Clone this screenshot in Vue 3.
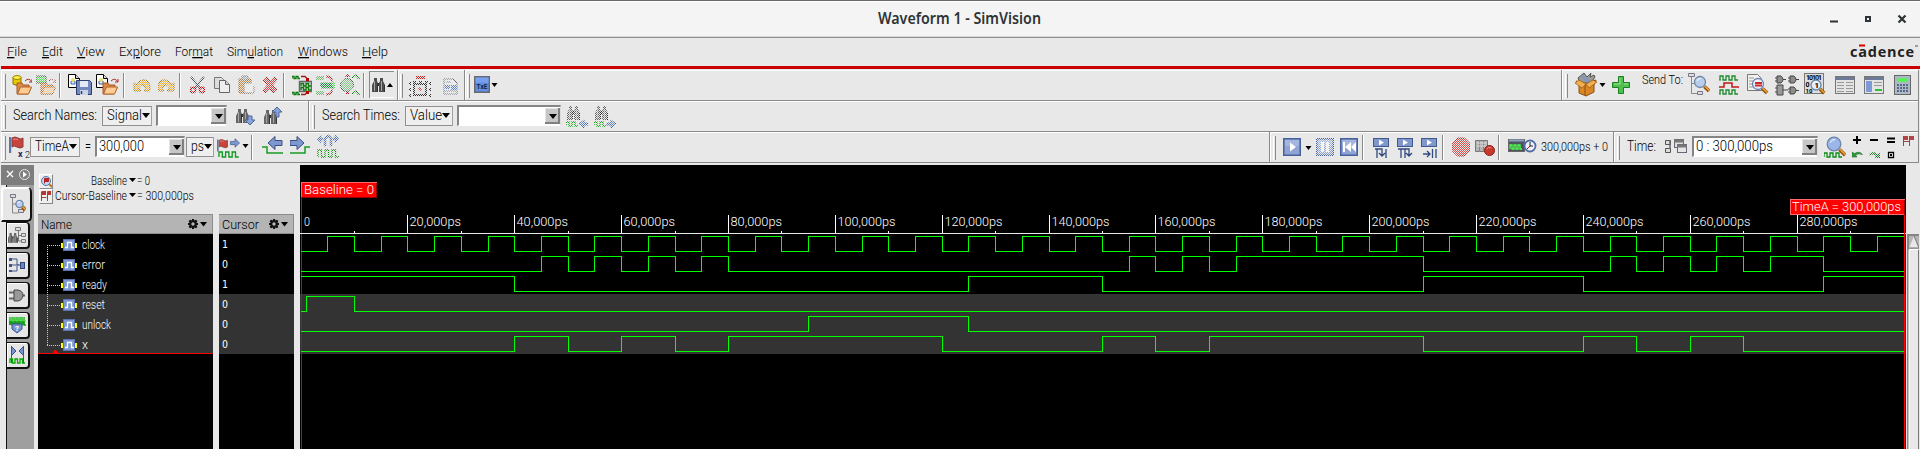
<script setup>
import { h } from 'vue'

// Single line of text with a fixed run length
const T = (p) =>
  h('svg', { class: 't', width: p.w, height: p.h || 14 }, [
    h('text', {
      x: 0, y: p.y ?? 11, 'font-size': p.s || 13, fill: p.c || '#000',
      textLength: p.w, lengthAdjust: 'spacingAndGlyphs',
    }, p.u === undefined ? p.t : [
      p.t.slice(0, p.u),
      h('tspan', { 'text-decoration': 'underline' }, p.t[p.u]),
      p.t.slice(p.u + 1),
    ]),
  ])
T.props = ['t', 'w', 'h', 's', 'y', 'c', 'u']

const menus = [
  { x: 7, t: 'File', w: 20, u: 0 }, { x: 42, t: 'Edit', w: 21, u: 0 }, { x: 77, t: 'View', w: 28, u: 0 },
  { x: 119, t: 'Explore', w: 42, u: 2 }, { x: 175, t: 'Format', w: 38, u: 3 }, { x: 227, t: 'Simulation', w: 56, u: 3 },
  { x: 298, t: 'Windows', w: 50, u: 0 }, { x: 362, t: 'Help', w: 26, u: 0 },
]

/* shared icon parts */
const folder = (x, y) => `<path d="M${x} ${y + 12}V${y + 1}h5l1 2h6v3h2l-3 6z" fill="#d98a4a" stroke="#a85a20"/><path d="M${x + .5} ${y + 12}l3-7h11l-3 7z" fill="#ffcb94" stroke="#b06428"/><path d="M${x + 8} ${y - 1}q4-4 7 1m0-3v3h-3" fill="none" stroke="#b03030"/>`
const page = (x, y) => `<path d="M${x}.5 ${y}.5h7l4 4v9h-11z" fill="#fff" stroke="#000"/><path d="M${x + 7}.5 ${y}.5v4h4" fill="#ddd" stroke="#000"/><path d="M${x + 3} ${y + 10}v-3h4v3z" fill="#dfe8ff" stroke="#3f63a8"/><circle cx="${x + 5}" cy="${y + 6}" r="2" fill="#e8e070"/>`
const binoc = (x, y, c = '#666') => `<g transform="translate(${x} ${y})"><path d="M2 0h3v3l1 2v9H0V7l2-4zM8 0h3v3l2 4v7H7V5l1-2z" fill="${c}"/><path d="M6 5h1v3H6z" fill="#333"/><path d="M2.500 3v10M9.500 3v10" stroke="#a5a5a5"/><path d="M5.500 5v9M12.500 7v7" stroke="#333"/></g>`
const mag = (cx, cy, r, f = '#b9cdec') => `<path d="M${cx + r * .8} ${cy + r * .8}l${r * .85} ${r * .85}" stroke="#8a5010" stroke-width="3.600"/><path d="M${cx + r * .9} ${cy + r * .8}l${r * .8} ${r * .8}" stroke="#f0a030" stroke-width="1.600"/><circle cx="${cx}" cy="${cy}" r="${r}" fill="${f}" stroke="#6c86a8" stroke-width="1.300"/><path d="M${cx - r * .55} ${cy - r * .2}q${r * .2}-${r * .5} ${r * .7}-${r * .45}" fill="none" stroke="#fff"/>`
const flag = (x, y) => `<path d="M${x + 1} ${y}v16" stroke="#5b77a6" stroke-width="2.400"/><path d="M${x + 3} ${y + 1}q3-2 6 0t5 0v9q-3 2-6 0t-5 0z" fill="#c9433d" stroke="#8c3a3a"/><path d="M${x + 4} ${y + 2.5}q3-1 5 0" fill="none" stroke="#e98a80"/>`
const wave = (x, y, n, c = '#1f8a2a', s = 3, hh = 4) => `<path d="M${x} ${y}${`v-${hh}h${s}v${hh}h${s}`.repeat(n)}" fill="none" stroke="${c}" stroke-width="1.300"/>`
const arr = (x, y, d, f = '#7d97cf') => `<path transform="translate(${x} ${y}) scale(${d} 1)" d="M-7-2.500h7v-4l7 6.500-7 6.500v-4h-7z" fill="${f}" stroke="#3a4f80"/>`
const win = (x, y, w, hh) => `<rect x="${x}.5" y="${y}.5" width="${w}" height="${hh}" fill="#e4e4e4" stroke="#777"/><path d="M${x + 1} ${y + 2.5}h${w - 1}" stroke="#6d7b99" stroke-width="3"/>`
const play = (x, y) => `<path d="M${x} ${y}l6 4.500-6 4.500z" fill="#fff"/>`
const blue = '<rect x=".75" y="6.750" width="16.500" height="16.500" fill="#8fa4d4" stroke="#46619b" stroke-width="1.500"/><path d="M2 8h14v6H2z" fill="#a5b6de"/>'
const step = '<rect x=".5" y="6.500" width="15" height="8" fill="#7f97cb" stroke="#41598e"/><path d="M6 7.500l5 3-5 3z" fill="#fff"/>'
const gates = (x, y) => `<path d="M${x} ${y}h4q4 3.500 0 7h-4z" fill="#8d8d8d" stroke="#444"/><path d="M${x - 2} ${y + 2}h2m-2 3h2m6-1.500h3" stroke="#444"/>`

const I = {
  opendb: `<path d="M1 7v7q4 3 8 0V7" fill="#e8c800" stroke="#8a7000"/><ellipse cx="5" cy="7.500" rx="4" ry="2" fill="#fff04a" stroke="#a08800"/>${folder(5, 12)}`,
  opendb2: `<path d="M0 6h10v7H0z" fill="#60e060" stroke="#444"/>${folder(5, 12)}`,
  save: `${page(0, 4)}<path d="M8.500 10.500h13l2 2v12h-15z" fill="#7389bd" stroke="#2b3f75"/><path d="M12 11h8v6h-8z" fill="#e6e9f3"/><path d="M12 20h8v5h-8z" fill="#ccd3e6"/><path d="M13.500 21v3" stroke="#2b3f75" stroke-width="1.500"/>`,
  opendoc: `${page(0, 4)}${folder(7, 12)}`,
  undo: '<path d="M1 13v8h7l-2.500-3q3-5 6-2 2 2 0 5h5q2-8-4-11-6-1-8.500 5z" fill="#f5b83a" stroke="#a87410"/>',
  redo: '<g transform="translate(17) scale(-1 1)"><path d="M1 13v8h7l-2.500-3q3-5 6-2 2 2 0 5h5q2-8-4-11-6-1-8.500 5z" fill="#f5b83a" stroke="#a87410"/></g>',
  cut: '<path d="M1 7l9 11M14 7L5 18" stroke="#555" stroke-width="2"/><circle cx="3" cy="20" r="2.500" fill="none" stroke="#c00" stroke-width="1.800"/><circle cx="12" cy="20" r="2.500" fill="none" stroke="#c00" stroke-width="1.800"/>',
  copy: '<path d="M.5 7.500h7l2 2v9h-9z" fill="#ddd" stroke="#777"/><path d="M5.500 10.500h6l4 4v8h-10z" fill="#eee" stroke="#666"/><path d="M11.500 10.500v4h4" fill="#ccc" stroke="#666"/>',
  paste: '<path d="M1 9h12v14H1z" fill="#cf8a45" stroke="#945a20"/><path d="M4 6h6v4H4z" fill="#aaa" stroke="#777"/><path d="M6 13h7l3 3v7H6z" fill="#eee" stroke="#777"/>',
  del: '<path d="M1 10l3-3 4 4 4-4 3 3-4.500 5 4.500 5-3 3-4-4-4 4-3-3 4.500-5z" fill="#d94a4a" stroke="#a01818"/>',
  grpA: `<rect x="7.500" y="11.500" width="12" height="10" fill="#cfcfcf" stroke="#666" stroke-width="1.500"/>${wave(9, 16, 2, '#0a7a0a', 2.5, 2.5)}${wave(9, 20, 2, '#0a7a0a', 2.5, 2.5)}${wave(0, 8.5, 2, '#0a7a0a', 2, 2)}${wave(0, 24.5, 2, '#0a7a0a', 2, 2)}<path d="M9 6.500h4l3 3m-7 15h4l3-3" fill="none" stroke="#a01818" stroke-width="1.300"/><path d="M14 8h3v3h-3zM14 21h3v3h-3z" fill="#b00"/>`,
  grpB: `<path d="M0 7h8M0 9h8M0 22h8M0 24h8" stroke="#080" stroke-width="1"/><path d="M5 12h14v7H5z" fill="#5de05d"/>${wave(5, 17, 3, '#063', 2, 3)}<path d="M10 6.500q6 0 6 5m-6 13q6 0 6-5" fill="none" stroke="#b22" stroke-width="1.800"/>`,
  grpC: '<ellipse cx="7" cy="15" rx="6.500" ry="6.500" fill="#8ac78a" stroke="#444"/><path d="M5 7h5l-2.500-3zM5 24h5l-2.500-3z" fill="#b00"/><path d="M12 8l4-3 2 3h2M12 24l4-3 2 3h2" fill="none" stroke="#080" stroke-width="1.500"/>',
  binoc: binoc(0, 8, '#4c4c4c'),
  area: '<path d="M7 6h9v3H7z" fill="#c22"/><rect x="5" y="14" width="12" height="11" fill="#ddd" stroke="#333" stroke-width="2"/><path d="M9 19h4m-2-2v4" stroke="#c00"/><path d="M1 12v3m0 3v3m0 3v3m20-15v3m0 3v3m0 3v3M4 12h3m3 0h3m3 0h3" stroke="#333" stroke-width="2"/>',
  docx: '<path d="M1 9h9l4 4v11H1z" fill="#eee" stroke="#667"/><path d="M2 15h5v4H2zM8 15h6v5H8z" fill="#5f84d8"/><path d="M2 21h11M3 12h5" stroke="#678"/>',
  txe: '<rect x=".75" y="6.750" width="14.500" height="15.500" fill="#5f8fe2" stroke="#68686c" stroke-width="1.500"/><path d="M1.500 7.500h13v5h-13z" fill="#79a0ec"/><text x="2.500" y="19" font-size="6.500" font-weight="700" textLength="11" fill="#14224c">TxE</text>',
  toolbox: '<path d="M3 8l6-5 3 4 4-4-1 4 4-2 1 2-4 6H5z" fill="#9a9a9a" stroke="#555"/><path d="M6 7l8 7 2-2-8-7z" fill="#8196c0"/><path d="M1 11l3 1 6 3 8-4 3-1-2 5v7l-8 4-7-3v-8z" fill="#d98724" stroke="#8a4c10"/><path d="M10 15v10" stroke="#8a4c10"/><path d="M0 13l4-3 7 4-4 4zM22 12l-4-2-7 4 3 4z" fill="#f0b050" stroke="#99540f" stroke-width=".7"/>',
  plus: '<path d="M6.500 6.500h5v6h6v5h-6v6h-5v-6h-6v-5h6z" fill="#4fc04f" stroke="#18801c"/><path d="M8 8v6H2M12 14h4" stroke="#9ce69c" fill="none"/>',
  tree: `<path d="M3.500 6v17.500h7M3.500 13.500h5" fill="none" stroke="#888"/><path d="M.5 3.500h6v3h-6zM9.500 21.500h5v3h-5z" fill="#ddd" stroke="#778"/>${mag(12, 12, 5.5)}`,
  waves: `${wave(1, 10, 3, '#1c8a2c', 3, 4)}<path d="M0 10h2M0 24h2" stroke="#1c8a2c"/>${wave(1, 24, 3, '#1c8a2c', 3, 4)}<path d="M0 17h5v-4h8v4h7" fill="none" stroke="#c01818" stroke-width="1.500"/>`,
  docmag: `<path d="M.5 4.500h10l4 4v12h-14z" fill="#f2f2f2" stroke="#777"/><path d="M2 8h5m-5 3h4m-4 3h4m-4 3h4" stroke="#999"/>${mag(11, 14, 5.5, '#e9eefc')}<path d="M8 13h7m-7 2.500h7" stroke="#d02828" stroke-width="2"/>`,
  gates: `${gates(2, 6)}${gates(15, 6)}${gates(15, 17)}<path d="M2 15h6v10H2z" fill="#999" stroke="#444"/><path d="M0 18h2m-2 4h2m6-2h5" stroke="#444"/>`,
  bits: `<rect x=".5" y="3.500" width="19" height="20" fill="#dedede" stroke="#777"/><text x="2" y="10" font-size="7" font-weight="700" textLength="16">10101</text><text x="1.500" y="17" font-size="7" font-weight="700">0</text><text x="1.500" y="23" font-size="6" font-weight="700">10</text>${mag(12, 15, 5, '#e3edfa')}<text x="10.500" y="18" font-size="8" font-weight="700">1</text>`,
  list: `${win(0, 6, 19, 17)}<path d="M2 12.500h7m-7 3h7m-7 3h7m-7 3h7m2-9h7m-7 3h7m-7 3h7m-7 3h7" stroke="#999"/>`,
  prop: `${win(0, 6, 19, 17)}<path d="M2 11h6v11H2z" fill="#7e9ad6"/><path d="M10 12.500h8m-8 3h8" stroke="#999"/><path d="M11 20h7" stroke="#2fc03a" stroke-width="2"/>`,
  calc: '<rect x=".5" y="5.500" width="16" height="19" fill="#aeb9c6" stroke="#666"/><path d="M3 8h11v4H3z" fill="#5cf05c"/><path d="M3 15h11m-11 3h11m-11 3h11" stroke="#5c6888" stroke-width="2" stroke-dasharray="2 1"/>',
  bdown: `${binoc(0, 8)}<path d="M12 15h4v4h3l-5 5-5-5h3z" fill="#8ba4d6" stroke="#4a66a0"/>`,
  bup: `${binoc(0, 9)}<path d="M12 16h3v-5h3l-5-5-5 5h4z" fill="#8ba4d6" stroke="#4a66a0"/>`,
  bleft: `${binoc(1, 5)}${wave(0, 25, 2, '#0a0', 3, 4)}<path d="M22 22h-4v-3l-5 4 5 4v-3h4z" fill="#6c8bd0" stroke="#3f5f9c"/>`,
  bright: `${binoc(1, 5)}${wave(0, 25, 2, '#0a0', 3, 4)}<path d="M13 22h4v-3l5 4-5 4v-3h-4z" fill="#6c8bd0" stroke="#3f5f9c"/>`,
  flagx: `${flag(0, 5)}<text x="9" y="25" font-size="9" font-weight="700" fill="#1c2a66">x</text><text x="16" y="26" font-size="9">2</text>`,
  flagw: `<g transform="scale(.75)">${flag(0, 10)}</g>${wave(2, 25, 3, '#0a9a1a', 3.3, 5)}<g transform="translate(18 11) scale(.65)">${arr(0, 0, 1)}</g>`,
  goL: `<path d="M0 15h5v6h16" fill="none" stroke="#1a9a24" stroke-width="1.500"/>${arr(13, 11, -1)}`,
  goR: `<path d="M0 21h15v-6h5" fill="none" stroke="#1a9a24" stroke-width="1.500"/>${arr(7, 11, 1)}`,
  sch: `<path d="M7 14V6l3-3h2l3 3v8h-2V7l-2-2-2 2v7zM0 7l4-4v3h2v2H4v3zM22 7l-4-4v3h-2v2h2v3z" fill="#4f6fb6" stroke="#5b75b0" stroke-width=".6"/>${wave(1, 25, 3, '#080', 3.5, 7)}`,
  play: blue + play(7, 10.5),
  pause: `${blue}<path d="M5 10h3v10H5zM10 10h3v10h-3z" fill="#fff"/>`,
  rew: `${blue}<path d="M3 10h2v10H3zM11 10v10l-6-5zM16 10v10l-5-5z" fill="#fff"/>`,
  s1: `${step}<path d="M2 17h7v7m-3-3l3 3 3-3M13 17v9M4 17v9" fill="none" stroke="#30497f" stroke-width="1.300"/>`,
  s2: `${step}<path d="M1 17h11v6m-3-2l3 3 3-3M4 17v9M8 17v9" fill="none" stroke="#30497f" stroke-width="1.300"/>`,
  s3: `${step}<path d="M2 22h7m-3-3l3 3-3 3M11.500 17v9M15 17v9" fill="none" stroke="#30497f" stroke-width="1.300"/>`,
  stop: '<path d="M5.500 6h7l5.500 5.500v7L12.500 24h-7L0 18.500v-7z" fill="#e0504c" stroke="#a01c1c"/>',
  rec: '<path d="M.5 8.500h12v11H.5z" fill="#b5b5b5" stroke="#777"/><path d="M4.500 8v12M8.500 8v12" stroke="#888"/><path d="M2 11h10m-10 3h10" stroke="#ddd"/><circle cx="14.500" cy="18.500" r="5" fill="#c8382c" stroke="#8a1c14"/><path d="M11.500 17q2-3 5-1" stroke="#f09080" fill="none"/>',
  clk: `<rect x=".5" y="7.500" width="16" height="12" fill="#4d5560" stroke="#666"/><path d="M1 8.500h15" stroke="#8fa0c0" stroke-width="2"/>${wave(2, 17, 3, '#4fff4f', 2, 4)}<circle cx="22" cy="14" r="5.500" fill="#eef2fa" stroke="#4f6ca6" stroke-width="1.800"/><path d="M22 10v4h3" fill="none" stroke="#222"/><path d="M22 14l-3 3" stroke="#c00"/>`,
  link: '<path d="M.5 8.500h5v4h-5zM.5 16.500h5v4h-5z" fill="#ddd" stroke="#555"/><path d="M5 8v9" stroke="#666" stroke-width="1.500"/><rect x="9.500" y="7.500" width="9" height="8" fill="#ddd" stroke="#667"/><path d="M9 9h10" stroke="#777" stroke-width="3"/><rect x="12.500" y="12.500" width="9" height="8" fill="#e5e5e5" stroke="#667"/><path d="M12 14h10" stroke="#777" stroke-width="3"/>',
  magw: `${wave(0, 25, 3, '#0a8a1a', 3, 4)}${mag(10, 12, 6.8, '#9db6ea')}`,
  grid: '<path d="M1 8h8M5 4v8M18 8h8M35 6.500h8M35 10h8" stroke="#000" stroke-width="2"/><path d="M52 4v10h-1V4zM57 10h-5v-1h5V4h1v10h-1z" fill="#944"/><path d="M52 4h4v4h-4zM58 4h4v4h-4z" fill="#b54545"/><path d="M0 20v5h5l-1.500-2q3-2 7-.5-3-4-8-1z" fill="#2d9a3a" stroke="#1a6a24" stroke-width=".6"/><path class="dim" d="M17 22q5-4 8 0l3-1v5h-5l1-2q-3-3-6 0z" fill="#1a7a24"/><path d="M36.500 20.500h5v5h-5z" fill="#fff" stroke="#000" stroke-width="1.300"/><path d="M38 22h2v2h-2z"/>',
}

// items carry their start column; the gap to the preceding item is derived from it
const section = (x, end, raw) => {
  let at = x
  const items = raw.map(([k, ix, w, o = {}]) => {
    const it = { k, w, ...o, style: { marginLeft: ix - at + 'px', width: w + 'px' } }
    at = ix + w
    return it
  })
  return { style: { width: end - x + 'px' }, items }
}
const ic = (n, x, w, dim) => ['icon', x, w, { n, dim }]
const tx = (t, x, w, s = 14, y = 19) => ['text', x, w, { t, s, y }]
const sep = (x) => ['sep', x, 2]
const grip = (x) => ['grip', x, 3]
const car = (x, y = 13) => ['caret', x, 7, { y }]
const sel = (t, x, w, tw) => ['select', x, w, { t, tw }]
const ent = (t, x, w, tw) => ['entry', x, w, { t, tw }]

const rows = [
  [
    section(1, 398, [grip(3), ic('opendb', 12, 20), ic('opendb2', 36, 20, 1), sep(59), ic('save', 68, 24), ic('opendoc', 96, 23), sep(123),
      ic('undo', 133, 18, 1), ic('redo', 158, 17, 1), sep(179), ic('cut', 190, 15, 1), ic('copy', 214, 17), ic('paste', 238, 17, 1), ic('del', 262, 15, 1), sep(283),
      ic('grpA', 292, 20), ic('grpB', 316, 20, 1), ic('grpC', 340, 20, 1), sep(363), ['press', 369, 25]]),
    section(398, 465, [grip(400), ic('area', 409, 23, 1), ic('docx', 443, 15, 1)]),
    section(465, 1562, [grip(467), ic('txe', 474, 16), car(491)]),
    section(1562, 1919, [grip(1565), ic('toolbox', 1575, 22), car(1599), ic('plus', 1612, 18), tx('Send To:', 1642, 41, 12, 14), ic('tree', 1688, 22), ic('waves', 1719, 20), ic('docmag', 1747, 22),
      ic('gates', 1775, 24), ic('bits', 1804, 23), ic('list', 1835, 20), ic('prop', 1864, 20), ic('calc', 1894, 17)]),
  ],
  [
    section(1, 309, [grip(3), tx('Search Names:', 13, 84), sel('Signal', 102, 50, 35), ent('', 156, 71, 0), ic('bdown', 236, 19), ic('bup', 264, 18)]),
    section(309, 1919, [grip(312), tx('Search Times:', 322, 78), sel('Value', 405, 48, 32), ent('', 457, 104, 0), ic('bleft', 566, 22, 1), ic('bright', 594, 22, 1)]),
  ],
  [
    section(1, 1270, [grip(3), ic('flagx', 9, 21), sel('TimeA', 30, 50, 34), tx('=', 85, 6), ent('300,000', 95, 90, 45), sel('ps', 186, 28, 13), ic('flagw', 217, 23), car(242, 12), sep(251),
      ic('goL', 262, 21), ic('goR', 290, 20), ic('sch', 317, 22, 1)]),
    section(1270, 1614, [grip(1273), ic('play', 1283, 18), car(1305, 14), ic('pause', 1316, 18, 1), ic('rew', 1340, 18), sep(1362), ic('s1', 1373, 16), ic('s2', 1397, 16), ic('s3', 1421, 16), sep(1442),
      ic('stop', 1452, 18, 1), ic('rec', 1475, 20), sep(1498), ic('clk', 1508, 29), tx('300,000ps + 0', 1541, 67, 12, 19)]),
    section(1614, 1919, [grip(1617), tx('Time:', 1627, 29), ic('link', 1665, 22), ent('0 : 300,000ps', 1692, 126, 77), ic('magw', 1824, 22), ic('grid', 1852, 63)]),
  ],
]

const tabs = [
  `<path d="M7.500 8v17h6M7.500 16h6" fill="none" stroke="#888"/><path d="M5.500 6.500h5v3h-5zM13.500 21.500h5v3h-5z" fill="#ddd" stroke="#778"/>${mag(14.5, 16, 3.6)}`,
  `<g transform="translate(1 10) scale(.75 .7)">${binoc(0, 0)}</g><path d="M11.500 7v11h4M11.500 12.500h4" fill="none" stroke="#777"/><path d="M8.500 4.500h5v3h-5zM14.500 10.500h4v3h-4zM14.500 16.500h4v3h-4z" fill="#ddd" stroke="#777"/>`,
  '<path d="M2 6h8v6h4M2 12h10M2 18h8v-5" fill="none" stroke="#3c5688"/><path d="M2 5h3v3H2zM2 11h3v3H2zM2 17h3v2H2z" fill="#3c5688"/><rect x="13.500" y="9.500" width="4" height="6" fill="#6d87be" stroke="#2f477c"/>',
  '<path d="M2 9.500h5M2 15.500h5M15 12.500h3" stroke="#666" stroke-width="2"/><path d="M7 7h4q5 1 5 5.500-1 5-5 5.500H7z" fill="#999" stroke="#444"/>',
  `<path d="M2 4h16v8H2z" fill="#777"/>${wave(3, 8, 4, '#4e4', 2, 3)}${wave(3, 12, 4, '#0a0', 2, 3)}<path d="M5 11h10v5l-5 4-5-4z" fill="#7693cf" stroke="#3b5590"/><text x="8" y="18" font-size="8" font-weight="700" fill="#fff">?</text>`,
  `<path d="M4.500 3v17M16.500 3v17" stroke="#c22"/><path d="M5 4l4 4-4 4M16 4l-4 4 4 4" fill="#7693cf" stroke="#3b5590"/>${wave(3, 20, 3, '#0a0', 2.5, 4)}`,
]

const K = 1603 / 300
const px = (t) => 1.5 + Math.floor(K * t)
const clock = Array.from({ length: 60 }, (_, i) => (i + 1) * 5).filter((t) => t < 300)
const signals = [
  { n: 'clock', w: 23, v: 1, init: 0, e: clock },
  { n: 'error', w: 23, v: 0, init: 0, e: [45, 50, 55, 60, 65, 70, 75, 80, 155, 160, 165, 170, 175, 210, 245, 250, 255, 260, 265, 270, 275, 285] },
  { n: 'ready', w: 25, v: 1, init: 1, e: [40, 125, 150, 210, 240, 285] },
  { n: 'reset', w: 23, v: 0, init: 0, e: [1, 10] },
  { n: 'unlock', w: 29, v: 0, init: 0, e: [95, 125] },
  { n: 'x', w: 6, v: 0, init: 0, e: [40, 50, 60, 70, 80, 120, 150, 160, 170, 210, 240, 250, 260, 270] },
]
const trace = (s, i) => {
  const y = (l) => 69 + i * 20 + (l ? 2.5 : 17.5)
  let l = s.init
  let d = `M1 ${y(l)}`
  for (const t of s.e) { l = 1 - l; d += `H${px(t)}V${y(l)}` }
  return d + 'H1605'
}
const ticks = Array.from({ length: 30 }, (_, i) => i * 10)
const gear = '<path d="M4 1h2v1.500l2-.7 1.300 1.300-.8 2h1.500v2H8.500l.8 2L8 10.300l-2-.8V11H4V9.500l-2 .8L.700 9l.8-2H0V5h1.500l-.8-2L2 1.700l2 .8z" fill="#111"/><circle cx="5" cy="6" r="1.700" fill="#b4b4b4"/><path d="M12 4h7l-3.500 4.500z" fill="#000"/>'
</script>

<template>
  <div class="app">
    <header class="title">
      <span class="spacer"></span>
      <T t="Waveform 1 - SimVision" :w="163" :h="20" :s="15.5" :y="14" c="#2e3436" class="caption" />
      <div class="controls">
        <svg width="90" height="36">
          <path d="M5 21.500h8" stroke="#2e3436" stroke-width="2" />
          <rect x="41" y="17" width="4" height="4" fill="none" stroke="#2e3436" stroke-width="2" />
          <path d="M73.500 15.500l7 7m0-7l-7 7" stroke="#2e3436" stroke-width="2.200" />
        </svg>
      </div>
    </header>
    <nav class="menu">
      <div v-for="(m, i) in menus" :key="m.t" :style="{ marginLeft: m.x - (i ? menus[i - 1].x + menus[i - 1].w : 0) + 'px' }">
        <T :t="m.t" :w="m.w" :u="m.u" :h="28" :y="18" :s="13" />
      </div>
      <svg class="brand" width="68" height="28">
        <text x="0" y="18.500" font-size="14.500" font-weight="700" textLength="64" lengthAdjust="spacing" fill="#222">cadence</text>
        <path d="M9 7.500h6" stroke="#d00" stroke-width="2" />
        <path d="M65 8h3" stroke="#555" />
      </svg>
    </nav>
    <div class="redline"></div>

    <div v-for="(r, ri) in rows" :key="ri" class="row">
      <div v-for="(s, si) in r" :key="si" class="section" :style="s.style">
        <div v-for="(it, i) in s.items" :key="i" class="item" :style="it.style">
          <svg v-if="it.k === 'icon'" :width="it.w" height="31" :class="{ dim: it.dim }" v-html="I[it.n]"></svg>
          <T v-else-if="it.k === 'text'" :t="it.t" :w="it.w" :h="31" :s="it.s" :y="it.y" />
          <i v-else-if="it.k === 'sep'" class="sep"></i>
          <i v-else-if="it.k === 'grip'" class="grip"></i>
          <svg v-else-if="it.k === 'caret'" width="7" height="31"><path :d="`M.5 ${it.y}h6l-3 4z`" /></svg>
          <div v-else-if="it.k === 'press'" class="press">
            <svg width="25" height="27"><g transform="translate(3 -1)" v-html="I.binoc"></g><path d="M18 16h6l-3-4z" /></svg>
          </div>
          <div v-else-if="it.k === 'select'" class="select">
            <T :t="it.t" :w="it.tw" :h="17" :y="13" :s="14" />
            <svg width="8" height="17"><path d="M0 6h8l-4 5z" /></svg>
          </div>
          <div v-else class="entry">
            <T v-if="it.t" :t="it.t" :w="it.tw" :h="17" :y="13" :s="14" />
            <b><svg width="8" height="5"><path d="M0 0h8l-4 5z" /></svg></b>
          </div>
        </div>
      </div>
    </div>

    <main class="work">
      <aside class="side">
        <div class="sidehead">
          <svg width="33" height="20">
            <path d="M6 6l6 6m0-6l-6 6" stroke="#fff" stroke-width="1.300" />
            <circle cx="23.500" cy="9.500" r="5" fill="none" stroke="#e8e8e8" /><path d="M22 6.500l4 3-4 3z" fill="#fff" />
          </svg>
        </div>
        <div class="tabs">
          <div v-for="(t, i) in tabs" :key="i" class="tab" :class="{ active: !i }"><svg width="21" height="28" v-html="t"></svg></div>
        </div>
      </aside>

      <section class="names">
        <div class="info">
          <div class="line">
            <i class="btn"><svg width="13" height="13"><path d="M8 8l4 4" stroke="#c07818" stroke-width="2" /><circle cx="6" cy="6" r="4.500" fill="#c5d4f0" stroke="#5878a8" /><path d="M4.500 8.500V3.500h4v3h-4" fill="#c22" stroke="#a22" /></svg></i>
            <T class="base" t="Baseline" :w="36" :s="12" :h="15" /><svg width="10" height="15"><path d="M2 4h7l-3.500 4z" /></svg><T t="= 0" :w="13" :s="12" :h="15" />
          </div>
          <div class="line">
            <i class="btn"><svg width="13" height="13"><path d="M1.500 11V1.500M1 7.500h5.500M7.500 11V1.500H11" fill="none" stroke="#944" /><path d="M2 1h4v4H2zM8 1h3v4H8z" fill="#b33" /></svg></i>
            <T class="curs" t="Cursor-Baseline" :w="72" :s="12" :h="15" /><svg width="10" height="15"><path d="M2 4h7l-3.500 4z" /></svg><T t="= 300,000ps" :w="57" :s="12" :h="15" />
          </div>
        </div>
        <div class="cols">
          <div class="col name">
            <div class="head"><T t="Name" :w="31" :s="13.5" :h="18" :y="13.5" /><svg width="20" height="12" v-html="gear"></svg></div>
            <div v-for="(s, i) in signals" :key="s.n" class="sig" :class="{ alt: i > 2 }">
              <svg width="40" height="20">
                <path :d="i ? (i === 5 ? 'M9.500 0V11' : 'M9.500 0V20') : 'M9.500 11V20'" stroke="#ccc" stroke-dasharray="1 1" />
                <path d="M9 11.500h14" stroke="#ccc" stroke-dasharray="1 1" />
                <path d="M23 9h2v5h-2zM37 9h2v5h-2z" fill="#ff0" />
                <rect x="25.500" y="5.500" width="11" height="11" fill="#7f98cf" stroke="#5873b0" />
                <path d="M27 13.500h2.500v-5h4v5h2.500" fill="none" stroke="#fff" stroke-width="1.300" />
              </svg>
              <T :t="s.n" :w="s.w" :s="12" :h="20" :y="15" c="#fff" />
            </div>
            <svg class="marker" width="175" height="5"><path d="M0 3.500h175" stroke="red" /><path d="M14 4l2-4h2l3 4z" fill="red" /></svg>
          </div>
          <div class="col cursor">
            <div class="head"><T t="Cursor" :w="37" :s="13.5" :h="18" :y="13.5" /><svg width="20" height="12" v-html="gear"></svg></div>
            <div v-for="(s, i) in signals" :key="s.n" class="val" :class="{ alt: i > 2 }">{{ s.v }}</div>
          </div>
        </div>
      </section>

      <svg class="wave" width="1606" height="284">
        <rect width="1606" height="284" />
        <rect y="129" width="1606" height="60" fill="#333" />
        <path d="M1.500 17V284" stroke="#d80000" />
        <path d="M0 68.500H1606" stroke="#e8e8e8" />
        <g v-for="t in ticks" :key="t">
          <path v-if="t" :d="`M${px(t)} ${t % 20 ? 66 : 50}V68`" stroke="#fff" />
          <text v-if="t % 20 === 0" :x="px(t) + (t ? 2 : 2.5)" y="61" font-size="13" fill="#fff" :textLength="t ? (t > 99 ? 58 : 51.5) : 6" lengthAdjust="spacingAndGlyphs">{{ t ? t + ',000ps' : '0' }}</text>
        </g>
        <path v-for="(s, i) in signals" :key="s.n" :d="trace(s, i)" fill="none" stroke="#0f0" />
        <path d="M1604.500 34V284" stroke="red" />
        <path d="M1 17h76v16h-76z" fill="#900" /><path d="M1 17h76l-1 1v14H1z" fill="#ff6a6a" /><path d="M2 18h74v14H2z" fill="red" />
        <text x="4" y="29" font-size="13" fill="#fff" textLength="70" lengthAdjust="spacingAndGlyphs">Baseline = 0</text>
        <path d="M1490 34h115v16h-115z" fill="#900" /><path d="M1490 34h115l-1 1v15h-114z" fill="#ff6a6a" /><path d="M1491 35h113v14h-113z" fill="red" />
        <text x="1492" y="46" font-size="13" fill="#fff" textLength="109" lengthAdjust="spacingAndGlyphs">TimeA = 300,000ps</text>
      </svg>

      <div class="scroll">
        <svg width="12" height="215">
          <path d="M0 0h12v215H0z" fill="#b4b4b4" /><path d="M0 0h12v2H2v213H0z" fill="#858585" />
          <path d="M7 2l5 12H2z" fill="#e8e8e8" /><path d="M7 2l5 12H2" fill="none" stroke="#777" />
          <path d="M2 15h10v200H2z" fill="#e8e8e8" /><path d="M2 215V15.500h9" fill="none" stroke="#fff" /><path d="M11.500 16v199" stroke="#777" />
        </svg>
      </div>
    </main>
  </div>
</template>

<style>
body { background: #e8e8e8; overflow: hidden; }
svg { display: block; flex: none; }
svg text { white-space: pre; }
</style>

<style scoped>
.app { width: 1920px; height: 449px; overflow: hidden; background: #e8e8e8; font-family: Roboto, "Liberation Sans", sans-serif; font-weight: 300; color: #000; }
.app :deep(.t) { overflow: visible; }
.title { height: 38px; box-sizing: border-box; display: grid; grid-template-columns: 877px 163px 1fr; background: #f4f4f4; border-top: 1px solid #6a6a6a; border-bottom: 1px solid #8e8e8e; box-shadow: inset 0 1px #fff, inset 0 -1px #d8d8d8; }
.caption { font-family: "Noto Sans", sans-serif; font-weight: 600; margin: 9px 0 0 1px; }
.controls { justify-self: end; margin-right: 5px; margin-top: -1px; }
.menu { display: flex; height: 28px; }
.brand { margin-left: auto; margin-right: 2px; font-family: "Open Sans", sans-serif; }
.redline { height: 3px; background: #c00; margin-left: 1px; }
.row { display: flex; height: 31px; padding-left: 1px; }
.section { display: flex; flex: none; height: 31px; margin-top: 1px; box-shadow: inset -1px -1px #8a8a8a, inset 1px 1px #fff; }
.item { flex: none; height: 31px; }
.dim, .app :deep(.dim) { mask-image: conic-gradient(#000 25%, transparent 0 50%, #000 0 75%, transparent 0); mask-size: 2px 2px; }
.sep { display: block; width: 1px; height: 25px; margin: 3px 0 0; border-right: 1px solid #fff; background: #8a8a8a; }
.grip { display: block; width: 1px; height: 24px; margin: 4px 0 0; border-left: 1px solid #fff; border-right: 1px solid #8a8a8a; background: #e8e8e8; }
.press { width: 25px; height: 27px; margin-top: 1px; box-sizing: border-box; box-shadow: inset 1px 1px #8a8a8a, inset 0 -1px #fff; }
.select { display: flex; justify-content: space-between; box-sizing: border-box; width: 100%; height: 20px; margin-top: 5px; padding: 0 2px 0 4px; background: #efefef; border: 1px solid #909090; border-right-color: #a0a0a0; }
.entry { display: flex; box-sizing: border-box; width: 100%; height: 21px; margin-top: 4px; padding-left: 2px; background: #fff; border: solid; border-width: 2px 1px 1px 2px; border-color: #858585 #ddd #fff #858585; }
.entry b { margin-left: auto; width: 15px; height: 16px; box-sizing: border-box; margin-top: 1px; display: grid; place-items: center; background: #c6c6c6; box-shadow: inset -2px -2px #808080, inset 1px 1px #e4e4e4; }
.work { display: flex; height: 284px; padding-left: 1px; margin-top: 3px; }
.side { width: 33px; background: linear-gradient(90deg, #e8e8e8 5px, #111 5px 6px, #9f9f9f 6px); }
.sidehead { height: 20px; background: #7e7e7e; }
.tabs { margin-top: 2px; height: 262px; display: flex; flex-direction: column; gap: 3px; }
.tab { box-sizing: border-box; width: 24px; height: 27px; margin-left: 5px; background: #e6e6e6; border: 1px solid #111; border-width: 1px 2px 2px 1px; border-radius: 0 4px 4px 0; box-shadow: inset 1px 1px #fff; }
.tab.active { width: 31px; height: 35px; margin: 0 0 -3px; border-color: #fff #111 #111 #fff; border-radius: 3px 5px 5px 0; padding-left: 3px; }
.names { width: 266px; padding: 0 6px 0 4px; box-sizing: border-box; }
.info { height: 49px; padding: 9px 0 0 1px; box-sizing: border-box; }
.line { display: flex; height: 15px; }
.btn { width: 12px; height: 13px; border: 1px solid #999; border-color: #fff #888 #888 #fff; background: #eee; overflow: hidden; }
.base { margin-left: 38px; }
.curs { margin-left: 2px; }
.cols { display: flex; justify-content: space-between; }
.col { height: 235px; background: #000; }
.name { width: 175px; }
.cursor { width: 75px; }
.head { display: flex; justify-content: space-between; align-items: center; box-sizing: border-box; height: 20px; padding: 0 4px 0 3px; background: #b4b4b4; border: 1px solid #8c8c8c; border-width: 1px 1px 1px 0; }
.sig { display: flex; height: 20px; gap: 4px; }
.alt { background: #333; }
.val { height: 20px; padding-left: 3px; font: 10.5px/20px "DejaVu Sans Condensed", "DejaVu Sans", sans-serif; color: #fff; }
.marker { margin-top: -4px; }
.wave { shape-rendering: crispEdges; }
.scroll { width: 12px; padding: 69px 0 0 1px; }
</style>
